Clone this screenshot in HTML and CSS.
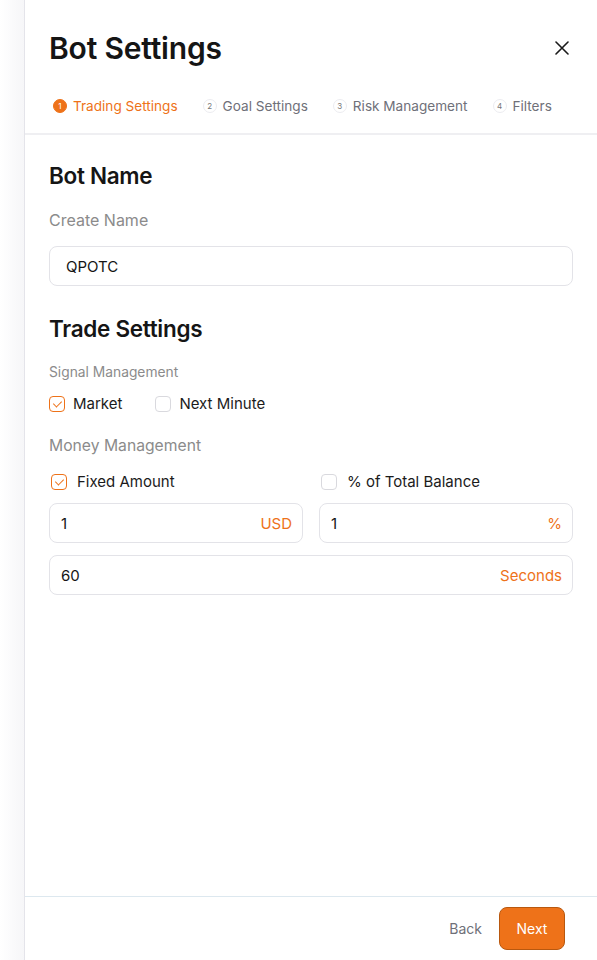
FILE: index.html
```html
<!DOCTYPE html>
<html lang="en">
<head>
  <meta charset="UTF-8" />
  <meta name="viewport" content="width=device-width, initial-scale=1.0"/>
  <title>Bot Settings</title>
  <link rel="stylesheet" href="styles.css">
</head>
<body>

  <div class="drawer">
    <div class="drawer-header">
      <div class="title-row">
        <h1>Bot Settings</h1>
        <button class="close-btn" aria-label="Close">
          <svg width="14" height="14" viewBox="0 0 14 14"><path d="M1 1L13 13M13 1L1 13" stroke="#1a1a1a" stroke-width="1.6" stroke-linecap="round"/></svg>
        </button>
      </div>
      <div class="steps">
        <div class="step active"><span class="num">1</span>Trading Settings</div>
        <div class="step"><span class="num">2</span>Goal Settings</div>
        <div class="step"><span class="num">3</span>Risk Management</div>
        <div class="step"><span class="num">4</span>Filters</div>
      </div>
    </div>

    <div class="drawer-body">
      <h2>Bot Name</h2>
      <div class="label">Create Name</div>
      <div class="field"><span>QPOTC</span></div>

      <h2 class="trade">Trade Settings</h2>
      <div class="label small">Signal Management</div>
      <div class="check-row">
        <label class="check"><span class="box checked"></span>Market</label>
        <label class="check"><span class="box"></span>Next Minute</label>
      </div>

      <div class="label money">Money Management</div>
      <div class="money-grid">
        <label class="check indent"><span class="box checked"></span>Fixed Amount</label>
        <label class="check indent"><span class="box"></span>% of Total Balance</label>
        <div class="field num"><span>1</span><span class="unit">USD</span></div>
        <div class="field num"><span>1</span><span class="unit">%</span></div>
      </div>
      <div class="field num seconds"><span>60</span><span class="unit">Seconds</span></div>
    </div>

    <div class="drawer-footer">
      <button class="back-btn">Back</button>
      <button class="next-btn">Next</button>
    </div>
  </div>

</body>
</html>
```

FILE: styles.css
```css
body {
  margin: 0;
  font-family: Inter, "Noto Sans", sans-serif;
  background: linear-gradient(to right, #ffffff 0, #f6f6f8 24px);
  color: #1b1b1b;
}

.drawer {
  margin-left: 24px;
  height: 960px;
  background: #fff;
  border-left: 1px solid #e4e4ea;
  display: flex;
  flex-direction: column;
  box-sizing: border-box;
}

.drawer-header {
  padding: 30px 24px 0 24px;
  border-bottom: 2px solid #efeff2;
}

.title-row {
  display: flex;
  justify-content: space-between;
  align-items: center;
}

h1 {
  margin: 0;
  font-size: 30px;
  font-weight: 600;
  letter-spacing: -0.2px;
  color: #151515;
}

.close-btn {
  background: none;
  border: none;
  padding: 4px;
  margin-right: 0;
  cursor: pointer;
  display: flex;
}

.steps {
  display: flex;
  gap: 25px;
  padding: 32px 0 19px 4px;
}

.step {
  display: flex;
  align-items: center;
  gap: 6px;
  font-size: 13.6px;
  color: #6f7079;
}

.step .num {
  width: 14px;
  height: 14px;
  border-radius: 50%;
  border: 1px solid #ececf0;
  box-sizing: border-box;
  font-size: 8px;
  color: #777;
  display: flex;
  align-items: center;
  justify-content: center;
}

.step.active {
  color: #ee7219;
}

.step.active .num {
  background: #ee7219;
  border-color: #ee7219;
  color: #fff;
}

.drawer-body {
  flex: 1;
  padding: 27px 24px 0 24px;
}

h2 {
  margin: 0;
  font-size: 22.5px;
  font-weight: 600;
  letter-spacing: -0.3px;
  color: #151515;
}

h2.trade {
  margin-top: 29px;
}

.label {
  font-size: 16px;
  color: #8b8b8b;
  margin: 21px 0 16px;
}

.label.small {
  font-size: 13.8px;
  margin: 22px 0 14px;
}

.label.money {
  font-size: 15.7px;
  margin: 23px 0 17px;
}

.field {
  height: 40px;
  border: 1px solid #e3e3e8;
  border-radius: 8px;
  box-sizing: border-box;
  padding: 0 10px 0 16px;
  display: flex;
  align-items: center;
  justify-content: space-between;
  font-size: 15px;
  color: #151515;
}

.field.num {
  padding-left: 11px;
}

.field .unit {
  color: #ee7219;
}

.field.seconds {
  margin-top: 12px;
}

.check-row {
  display: flex;
  gap: 33px;
}

.check {
  display: flex;
  align-items: center;
  gap: 8px;
  font-size: 15px;
  color: #1b1b1b;
}

.check.indent {
  padding-left: 2px;
  gap: 10px;
}

.box {
  width: 16px;
  height: 16px;
  border: 1px solid #d9d9de;
  border-radius: 4px;
  box-sizing: border-box;
  position: relative;
}

.box.checked {
  border-color: #ee7219;
}

.box.checked::after {
  content: "";
  position: absolute;
  left: 4.5px;
  top: 2px;
  width: 4px;
  height: 7px;
  border-right: 1.8px solid #ee7219;
  border-bottom: 1.8px solid #ee7219;
  transform: rotate(45deg);
}

.money-grid {
  display: grid;
  grid-template-columns: 1fr 1fr;
  column-gap: 16px;
  row-gap: 12px;
}

.drawer-footer {
  border-top: 1px solid #dde8ef;
  height: 63px;
  display: flex;
  align-items: center;
  justify-content: flex-end;
  gap: 17px;
  padding-right: 32px;
}

.back-btn {
  background: none;
  border: none;
  padding: 0;
  font-family: inherit;
  font-size: 14px;
  color: #6f7079;
  cursor: pointer;
}

.next-btn {
  background: #ee7219;
  border: 1px solid #b8580f;
  border-radius: 8px;
  color: #fff;
  font-family: inherit;
  font-size: 14px;
  width: 66px;
  height: 43px;
  cursor: pointer;
}
```
